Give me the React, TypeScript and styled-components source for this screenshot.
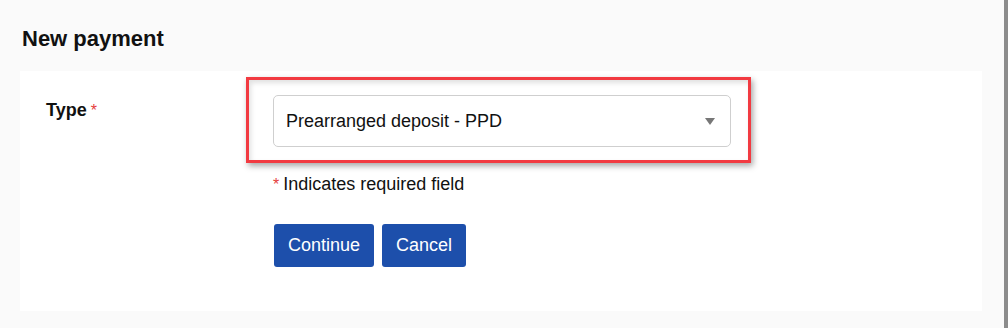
import React from 'react';
import styled, { createGlobalStyle } from 'styled-components';

const GlobalStyle = createGlobalStyle`
  html, body {
    margin: 0;
    padding: 0;
    background: #fafafa;
  }
  body {
    font-family: "Liberation Sans", Arial, sans-serif;
    color: #111;
  }
`;

const Frame = styled.div`
  width: 1008px;
  height: 328px;
  box-sizing: border-box;
  border-right: 4px solid #8c8c8c;
  padding: 0 22px 0 20px;
  overflow: hidden;
`;

const Heading = styled.h2`
  margin: 0;
  padding: 26px 0 0 2px;
  height: 71px;
  box-sizing: border-box;
  font-size: 22px;
  line-height: 26px;
  font-weight: bold;
  color: #111;
`;

const Panel = styled.div`
  background: #fff;
  display: grid;
  grid-template-columns: 227px 458px;
  padding: 24px 0 44px 26px;
`;

const Label = styled.div`
  font-size: 18px;
  font-weight: bold;
  line-height: 22px;
  padding-top: 4px;
`;

const Star = styled.span<{ $lead?: boolean }>`
  color: #e5403c;
  font-weight: normal;
  font-size: 16px;
  margin: ${({ $lead }) => ($lead ? '0 4px 0 0' : '0 0 0 4px')};
`;

const Field = styled.div`
  display: flex;
  flex-direction: column;
`;

const Highlight = styled.div`
  margin: -18px -20px -16px -27px;
  padding: 15px 17px 13px 24px;
  border: 3px solid #f23a41;
  box-shadow: 2px 3px 6px rgba(0, 0, 0, 0.35), inset 2px 3px 5px rgba(0, 0, 0, 0.12);
`;

const Select = styled.div`
  height: 52px;
  box-sizing: border-box;
  border: 1px solid #cfcfcf;
  border-radius: 5px;
  background: #fff;
  display: flex;
  align-items: center;
  justify-content: space-between;
  padding: 0 15px 0 12px;
  font-size: 18px;
  color: #111;
`;

const Caret = styled.span`
  width: 0;
  height: 0;
  border-left: 5px solid transparent;
  border-right: 5px solid transparent;
  border-top: 7px solid #777;
`;

const Note = styled.div`
  margin-top: 26px;
  font-size: 18px;
  line-height: 22px;
`;

const Actions = styled.div`
  display: flex;
  gap: 8px;
  margin-top: 28px;
  padding-left: 1px;
`;

const Button = styled.button`
  height: 43px;
  padding: 0 14px;
  border: none;
  border-radius: 3px;
  background: #1d4fab;
  color: #fff;
  font-family: "Liberation Sans", Arial, sans-serif;
  font-size: 18px;
  cursor: pointer;
`;

export default function App() {
  return (
    <>
      <GlobalStyle />
      <Frame>
        <Heading>New payment</Heading>
        <Panel>
          <Label>
            Type<Star>*</Star>
          </Label>
          <Field>
            <Highlight>
              <Select>
                <span>Prearranged deposit - PPD</span>
                <Caret />
              </Select>
            </Highlight>
            <Note>
              <Star $lead>*</Star>Indicates required field
            </Note>
            <Actions>
              <Button>Continue</Button>
              <Button>Cancel</Button>
            </Actions>
          </Field>
        </Panel>
      </Frame>
    </>
  );
}
